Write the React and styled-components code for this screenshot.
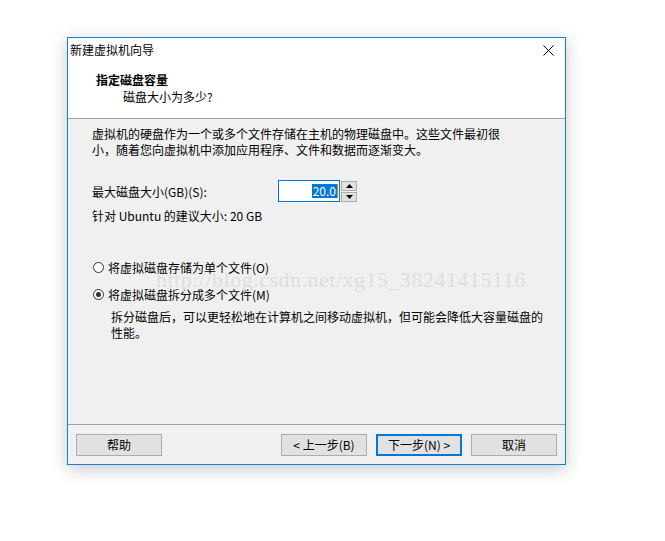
import React from "react";
import styled, { createGlobalStyle } from "styled-components";

const GlobalStyle = createGlobalStyle`
  html, body {
    margin: 0;
    padding: 0;
    background: #ffffff;
  }
  body {
    font-family: "Microsoft YaHei UI", "Noto Sans CJK SC", "Noto Sans", sans-serif;
    font-size: 12px;
    color: #000000;
  }
`;

const Page = styled.div`
  width: 665px;
  height: 541px;
  padding: 37px 0 0 67px;
  box-sizing: border-box;
`;

const Window = styled.div`
  position: relative;
  width: 499px;
  height: 428px;
  box-sizing: border-box;
  border: 1px solid #1a7fd4;
  background: #f0f0f0;
  display: flex;
  flex-direction: column;
  box-shadow: 0 4px 16px rgba(0, 0, 0, 0.22);
`;

const TitleBar = styled.div`
  height: 24px;
  background: #ffffff;
  display: flex;
  align-items: center;
  justify-content: space-between;
  padding: 0 10px 0 2px;
  font-size: 12px;
  line-height: 16px;
`;

const CloseButton = styled.div`
  width: 14px;
  height: 14px;
  display: flex;
  align-items: center;
  justify-content: center;
`;

const Header = styled.div`
  height: 57px;
  background: #ffffff;
  border-bottom: 1px solid #a0a0a0;
  padding: 9px 0 0 28px;
  box-sizing: border-box;
`;

const HeaderTitle = styled.div`
  font-weight: bold;
  line-height: 17px;
`;

const HeaderSub = styled.div`
  line-height: 17px;
  padding-left: 27px;
`;

const Body = styled.div`
  position: relative;
  flex: 1;
  padding: 7px 24px 0 24px;
  display: flex;
  flex-direction: column;
`;

const Paragraph = styled.div`
  line-height: 16px;
  white-space: nowrap;
  margin: ${(p) => p.$margin || "0"};
  padding-left: ${(p) => p.$indent || "0"};
`;

const SizeRow = styled.div`
  display: flex;
  align-items: center;
  margin-top: 22px;
  height: 22px;
`;

const SizeLabel = styled.div`
  width: 186px;
`;

const InputBox = styled.div`
  width: 62px;
  height: 22px;
  box-sizing: border-box;
  border: 1px solid #0078d7;
  background: #ffffff;
  display: flex;
  align-items: center;
  justify-content: flex-end;
  padding-right: 1px;
`;

const Selected = styled.span`
  background: #0078d7;
  color: #ffffff;
  line-height: 14px;
  padding: 0 1px;
  border-right: 1px solid #e08020;
`;

const Spinner = styled.div`
  display: flex;
  flex-direction: column;
  gap: 1px;
  margin-left: 1px;
`;

const SpinButton = styled.div`
  width: 16px;
  height: 10px;
  box-sizing: border-box;
  border: 1px solid #adadad;
  background: #e1e1e1;
  display: flex;
  align-items: center;
  justify-content: center;
`;

const RadioRow = styled.div`
  display: flex;
  align-items: center;
  height: 16px;
  white-space: nowrap;
  margin-top: ${(p) => p.$top};
  margin-left: 1px;
`;

const RadioCircle = styled.span`
  width: 11px;
  height: 11px;
  box-sizing: border-box;
  border: 1px solid #333333;
  border-radius: 50%;
  background: #ffffff;
  margin-right: 4px;
  display: flex;
  align-items: center;
  justify-content: center;
`;

const RadioDot = styled.span`
  width: 5px;
  height: 5px;
  border-radius: 50%;
  background: #333333;
`;

const Footer = styled.div`
  height: 40px;
  border-top: 1px solid #a0a0a0;
  display: flex;
  align-items: center;
  padding: 0 8px;
  box-sizing: border-box;
`;

const Button = styled.div`
  width: 86px;
  height: 22px;
  box-sizing: border-box;
  border: ${(p) => (p.$primary ? "2px solid #0078d7" : "1px solid #adadad")};
  background: #e1e1e1;
  display: flex;
  align-items: center;
  justify-content: center;
  margin-left: ${(p) => p.$gap || "0"};
`;

const Spacer = styled.div`
  flex: 1;
`;

const Watermark = styled.div`
  position: absolute;
  left: 88px;
  top: 149px;
  font-family: "Liberation Serif", serif;
  font-size: 22px;
  line-height: 24px;
  color: #dedede;
  letter-spacing: 0.5px;
  pointer-events: none;
  white-space: nowrap;
`;

const Arrow = ({ up }) => (
  <svg width="7" height="4" viewBox="0 0 7 4">
    <path d={up ? "M0 4 L3.5 0 L7 4 Z" : "M0 0 L7 0 L3.5 4 Z"} fill="#000" />
  </svg>
);

export default function App() {
  return (
    <>
      <GlobalStyle />
      <Page>
        <Window>
          <TitleBar>
            <span>新建虚拟机向导</span>
            <CloseButton>
              <svg width="11" height="11" viewBox="0 0 11 11">
                <path d="M0.5 0.5 L10.5 10.5 M10.5 0.5 L0.5 10.5" stroke="#000" strokeWidth="1" />
              </svg>
            </CloseButton>
          </TitleBar>
          <Header>
            <HeaderTitle>指定磁盘容量</HeaderTitle>
            <HeaderSub>磁盘大小为多少?</HeaderSub>
          </Header>
          <Body>
            <Watermark>http://blog.csdn.net/xg15_38241415116</Watermark>
            <Paragraph>
              虚拟机的硬盘作为一个或多个文件存储在主机的物理磁盘中。这些文件最初很
              <br />
              小，随着您向虚拟机中添加应用程序、文件和数据而逐渐变大。
            </Paragraph>
            <SizeRow>
              <SizeLabel>最大磁盘大小(GB)(S):</SizeLabel>
              <InputBox>
                <Selected>20.0</Selected>
              </InputBox>
              <Spinner>
                <SpinButton>
                  <Arrow up />
                </SpinButton>
                <SpinButton>
                  <Arrow />
                </SpinButton>
              </Spinner>
            </SizeRow>
            <Paragraph $margin="6px 0 0 0">针对 Ubuntu 的建议大小: 20 GB</Paragraph>
            <RadioRow $top="35px">
              <RadioCircle />
              将虚拟磁盘存储为单个文件(O)
            </RadioRow>
            <RadioRow $top="11px">
              <RadioCircle>
                <RadioDot />
              </RadioCircle>
              将虚拟磁盘拆分成多个文件(M)
            </RadioRow>
            <Paragraph $margin="7px 0 0 0" $indent="19px">
              拆分磁盘后，可以更轻松地在计算机之间移动虚拟机，但可能会降低大容量磁盘的
              <br />
              性能。
            </Paragraph>
          </Body>
          <Footer>
            <Button>帮助</Button>
            <Spacer />
            <Button>&lt; 上一步(B)</Button>
            <Button $primary $gap="9px">下一步(N) &gt;</Button>
            <Button $gap="9px">取消</Button>
          </Footer>
        </Window>
      </Page>
    </>
  );
}
